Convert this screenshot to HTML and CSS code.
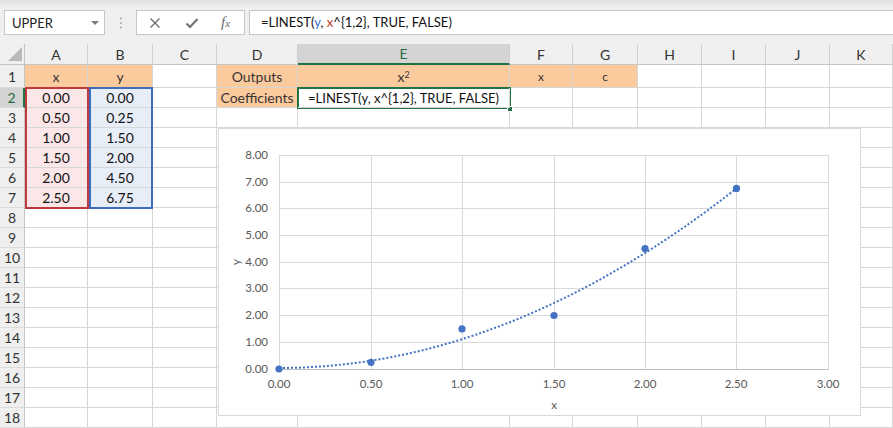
FILE: index.html
```html
<!DOCTYPE html>
<html>
<head>
<meta charset="utf-8">
<link rel="stylesheet" href="styles.css">
</head>
<body>
<div class="app">
  <div class="fbar">
    <div class="namebox"><span class="nbtext">UPPER</span><span class="dd"></span></div>
    <div class="grip">
      <svg width="4" height="12" viewBox="0 0 4 12"><circle cx="2" cy="1.5" r="1" fill="#a8a8a8"/><circle cx="2" cy="6" r="1" fill="#a8a8a8"/><circle cx="2" cy="10.5" r="1" fill="#a8a8a8"/></svg>
    </div>
    <div class="fbtns">
      <svg class="ico" width="12" height="12" viewBox="0 0 12 12"><path d="M1.5 1.5 L10.5 10.5 M10.5 1.5 L1.5 10.5" stroke="#6f6f6f" stroke-width="1.4" fill="none"/></svg>
      <svg class="ico" width="14" height="12" viewBox="0 0 14 12"><path d="M1.5 6.5 L5 10 L12.5 2" stroke="#6f6f6f" stroke-width="2" fill="none"/></svg>
      <span class="fx">f<span class="fxx">x</span></span>
    </div>
    <div class="finput">=LINEST(<span class="ry">y</span>, <span class="rx">x</span>^{1,2}, TRUE, FALSE)</div>
  </div>
  <div class="sheet">
    <div class="grid">
      <div class="h corner"><svg width="14" height="14" viewBox="0 0 14 14"><path d="M14 0 L14 14 L0 14 Z" fill="#b9b9b9"/></svg></div>
      <div class="h">A</div><div class="h">B</div><div class="h">C</div><div class="h">D</div><div class="h hsel">E</div><div class="h">F</div><div class="h">G</div><div class="h">H</div><div class="h">I</div><div class="h">J</div><div class="h">K</div>

      <div class="r r1">1</div><div class="c o">x</div><div class="c o">y</div><div class="c"></div><div class="c o">Outputs</div><div class="c o">x<sup>2</sup></div><div class="c o sm">x</div><div class="c o sm">c</div><div class="c"></div><div class="c"></div><div class="c"></div><div class="c"></div>

      <div class="r rsel">2</div><div class="c pk">0.00</div><div class="c bl">0.00</div><div class="c"></div><div class="c o">Coefficients</div><div class="c fcell">=LINEST(y, x^{1,2}, TRUE, FALSE)</div><div class="c"></div><div class="c"></div><div class="c"></div><div class="c"></div><div class="c"></div><div class="c"></div>

      <div class="r">3</div><div class="c pk">0.50</div><div class="c bl">0.25</div><div class="c"></div><div class="c"></div><div class="c"></div><div class="c"></div><div class="c"></div><div class="c"></div><div class="c"></div><div class="c"></div><div class="c"></div>
      <div class="r">4</div><div class="c pk">1.00</div><div class="c bl">1.50</div><div class="c"></div><div class="c"></div><div class="c"></div><div class="c"></div><div class="c"></div><div class="c"></div><div class="c"></div><div class="c"></div><div class="c"></div>
      <div class="r">5</div><div class="c pk">1.50</div><div class="c bl">2.00</div><div class="c"></div><div class="c"></div><div class="c"></div><div class="c"></div><div class="c"></div><div class="c"></div><div class="c"></div><div class="c"></div><div class="c"></div>
      <div class="r">6</div><div class="c pk">2.00</div><div class="c bl">4.50</div><div class="c"></div><div class="c"></div><div class="c"></div><div class="c"></div><div class="c"></div><div class="c"></div><div class="c"></div><div class="c"></div><div class="c"></div>
      <div class="r">7</div><div class="c pk">2.50</div><div class="c bl">6.75</div><div class="c"></div><div class="c"></div><div class="c"></div><div class="c"></div><div class="c"></div><div class="c"></div><div class="c"></div><div class="c"></div><div class="c"></div>
      <div class="r">8</div><div class="c"></div><div class="c"></div><div class="c"></div><div class="c"></div><div class="c"></div><div class="c"></div><div class="c"></div><div class="c"></div><div class="c"></div><div class="c"></div><div class="c"></div>
      <div class="r">9</div><div class="c"></div><div class="c"></div><div class="c"></div><div class="c"></div><div class="c"></div><div class="c"></div><div class="c"></div><div class="c"></div><div class="c"></div><div class="c"></div><div class="c"></div>
      <div class="r">10</div><div class="c"></div><div class="c"></div><div class="c"></div><div class="c"></div><div class="c"></div><div class="c"></div><div class="c"></div><div class="c"></div><div class="c"></div><div class="c"></div><div class="c"></div>
      <div class="r">11</div><div class="c"></div><div class="c"></div><div class="c"></div><div class="c"></div><div class="c"></div><div class="c"></div><div class="c"></div><div class="c"></div><div class="c"></div><div class="c"></div><div class="c"></div>
      <div class="r">12</div><div class="c"></div><div class="c"></div><div class="c"></div><div class="c"></div><div class="c"></div><div class="c"></div><div class="c"></div><div class="c"></div><div class="c"></div><div class="c"></div><div class="c"></div>
      <div class="r">13</div><div class="c"></div><div class="c"></div><div class="c"></div><div class="c"></div><div class="c"></div><div class="c"></div><div class="c"></div><div class="c"></div><div class="c"></div><div class="c"></div><div class="c"></div>
      <div class="r">14</div><div class="c"></div><div class="c"></div><div class="c"></div><div class="c"></div><div class="c"></div><div class="c"></div><div class="c"></div><div class="c"></div><div class="c"></div><div class="c"></div><div class="c"></div>
      <div class="r">15</div><div class="c"></div><div class="c"></div><div class="c"></div><div class="c"></div><div class="c"></div><div class="c"></div><div class="c"></div><div class="c"></div><div class="c"></div><div class="c"></div><div class="c"></div>
      <div class="r">16</div><div class="c"></div><div class="c"></div><div class="c"></div><div class="c"></div><div class="c"></div><div class="c"></div><div class="c"></div><div class="c"></div><div class="c"></div><div class="c"></div><div class="c"></div>
      <div class="r">17</div><div class="c"></div><div class="c"></div><div class="c"></div><div class="c"></div><div class="c"></div><div class="c"></div><div class="c"></div><div class="c"></div><div class="c"></div><div class="c"></div><div class="c"></div>
      <div class="r">18</div><div class="c"></div><div class="c"></div><div class="c"></div><div class="c"></div><div class="c"></div><div class="c"></div><div class="c"></div><div class="c"></div><div class="c"></div><div class="c"></div><div class="c"></div>
    </div>

    <div class="hl hl-red"></div>
    <div class="hl hl-blue"></div>
    <div class="active"></div>
    <div class="handle"></div>

    <svg class="chart" width="643" height="288" viewBox="0 0 643 288">
      <rect x="0.5" y="0.5" width="642" height="287" fill="#ffffff" stroke="#d9d9d9"/>
      <g stroke="#d9d9d9" stroke-width="1">
        <line x1="61" y1="27.5" x2="610" y2="27.5"/>
        <line x1="61" y1="54.5" x2="610" y2="54.5"/>
        <line x1="61" y1="80.5" x2="610" y2="80.5"/>
        <line x1="61" y1="107.5" x2="610" y2="107.5"/>
        <line x1="61" y1="134.5" x2="610" y2="134.5"/>
        <line x1="61" y1="160.5" x2="610" y2="160.5"/>
        <line x1="61" y1="187.5" x2="610" y2="187.5"/>
        <line x1="61" y1="214.5" x2="610" y2="214.5"/>
        <line x1="61.5" y1="27" x2="61.5" y2="241"/>
        <line x1="153.5" y1="27" x2="153.5" y2="241"/>
        <line x1="244.5" y1="27" x2="244.5" y2="241"/>
        <line x1="336.5" y1="27" x2="336.5" y2="241"/>
        <line x1="427.5" y1="27" x2="427.5" y2="241"/>
        <line x1="518.5" y1="27" x2="518.5" y2="241"/>
        <line x1="610.5" y1="27" x2="610.5" y2="241"/>
      </g>
      <line x1="61" y1="241.5" x2="611" y2="241.5" stroke="#bfbfbf" stroke-width="1"/>
      <g class="lbl" text-anchor="end">
        <text x="50" y="31">8.00</text>
        <text x="50" y="58">7.00</text>
        <text x="50" y="84">6.00</text>
        <text x="50" y="111">5.00</text>
        <text x="50" y="138">4.00</text>
        <text x="50" y="164">3.00</text>
        <text x="50" y="191">2.00</text>
        <text x="50" y="218">1.00</text>
        <text x="50" y="245">0.00</text>
      </g>
      <g class="lbl" text-anchor="middle">
        <text x="61" y="260">0.00</text>
        <text x="153" y="260">0.50</text>
        <text x="244" y="260">1.00</text>
        <text x="336" y="260">1.50</text>
        <text x="427" y="260">2.00</text>
        <text x="518" y="260">2.50</text>
        <text x="610" y="260">3.00</text>
      </g>
      <text class="lbl" x="336" y="281" text-anchor="middle">x</text>
      <text class="lbl" x="0" y="0" text-anchor="middle" transform="translate(22 134) rotate(-90)">y</text>
      <path d="M61 240 Q289.75 239.8 518.5 60.4" fill="none" stroke="#4472c4" stroke-width="2" stroke-dasharray="2 2"/>
      <g fill="#4472c4">
        <circle cx="61" cy="241" r="3.6"/>
        <circle cx="153" cy="234.3" r="3.6"/>
        <circle cx="244" cy="200.9" r="3.6"/>
        <circle cx="336" cy="187.5" r="3.6"/>
        <circle cx="427" cy="120.6" r="3.6"/>
        <circle cx="518.5" cy="60.4" r="3.6"/>
      </g>
    </svg>
  </div>
</div>
</body>
</html>
```
FILE: styles.css
```css
* { box-sizing: border-box; }
html, body { margin: 0; padding: 0; }
body {
  width: 893px;
  height: 428px;
  overflow: hidden;
  background: #ffffff;
  font-family: "Lato", "Liberation Sans", sans-serif;
}
.app { width: 893px; height: 428px; overflow: hidden; }

.fbar {
  height: 44px;
  display: flex;
  align-items: flex-start;
  padding: 10px 0 0 4px;
  background: linear-gradient(#e0e0e0 0px, #efefef 7px, #f0f0f0 100%);
}
.namebox {
  width: 101px;
  height: 25px;
  background: #fff;
  border: 1px solid #c6c6c6;
  display: flex;
  align-items: center;
  justify-content: space-between;
  padding: 0 5px 0 7px;
  font-size: 13px;
  color: #222;
}
.dd {
  width: 0; height: 0;
  border-left: 4px solid transparent;
  border-right: 4px solid transparent;
  border-top: 4px solid #7a7a7a;
}
.grip {
  width: 31px;
  height: 25px;
  display: flex;
  align-items: center;
  justify-content: center;
}
.fbtns {
  width: 109px;
  height: 25px;
  background: #fff;
  border: 1px solid #c6c6c6;
  display: flex;
  align-items: center;
  padding-left: 12px;
  gap: 0;
}
.fbtns .ico:first-child { margin-right: 24px; }
.fbtns .ico:nth-child(2) { margin-right: 22px; }
.fx {
  font-family: "Liberation Serif", serif;
  font-style: italic;
  font-size: 15px;
  color: #6a6a6a;
  line-height: 1;
}
.fxx { font-size: 11px; }
.finput {
  flex: 1;
  margin-left: 4px;
  height: 25px;
  background: #fff;
  border: 1px solid #c6c6c6;
  border-right: none;
  padding-left: 11px;
  font-size: 13px;
  line-height: 23px;
  color: #111;
  white-space: nowrap;
}
.ry { color: #3e6dbf; }
.rx { color: #c0392b; }

.sheet { position: relative; width: 893px; height: 384px; }
.grid {
  display: grid;
  grid-template-columns: 25px 63px 65px 64px 81px 212px 63px 65px 64px 64px 64px 63px;
  grid-template-rows: 21px 23px repeat(17, 20px);
}
.h {
  background: #efefef;
  border-right: 1px solid #d0d0d0;
  border-bottom: 1px solid #c4c4c4;
  display: flex;
  align-items: center;
  justify-content: center;
  font-size: 14px;
  color: #333;
}
.corner {
  align-items: flex-end;
  justify-content: flex-end;
  padding: 0 2px 3px 0;
  border-right: 1px solid #c4c4c4;
}
.hsel {
  background: #d4d4d4;
  color: #1f6b3f;
  border-bottom: 2px solid #217346;
}
.r {
  background: #efefef;
  border-right: 1px solid #c4c4c4;
  border-bottom: 1px solid #dcdcdc;
  display: flex;
  align-items: center;
  justify-content: center;
  font-size: 14px;
  color: #333;
}
.rsel {
  background: #d4d4d4;
  color: #1f6b3f;
  border-right: 2px solid #217346;
}
.c {
  border-right: 1px solid #d6d6d6;
  border-bottom: 1px solid #d6d6d6;
  display: flex;
  align-items: center;
  justify-content: center;
  font-size: 14px;
  color: #111;
  white-space: nowrap;
  overflow: visible;
}
.o { background: #fbcb9d; color: #3a3436; }
.sm { font-size: 12px; }
.pk { background: #fbe7e8; }
.bl { background: #e8eef8; }
.c sup { font-size: 9px; line-height: 0; position: relative; top: -1px; vertical-align: super; }
.fcell { position: relative; z-index: 1; font-size: 13px; }

.hl { position: absolute; border: 2px solid; pointer-events: none; }
.hl-red { left: 25px; top: 43px; width: 64px; height: 122px; border-color: #bf3b3b; }
.hl-blue { left: 89px; top: 43px; width: 64px; height: 122px; border-color: #3e6dbf; }
.active {
  position: absolute;
  left: 297px; top: 43px; width: 214px; height: 22px;
  border: 2px solid #217346;
}
.handle {
  position: absolute;
  left: 507px; top: 62px; width: 6px; height: 6px;
  background: #217346;
  border: 1px solid #fff;
}
.chart { position: absolute; left: 218px; top: 84px; }
.lbl { font-family: "Lato", "Liberation Sans", sans-serif; font-size: 11.5px; fill: #595959; }
```
